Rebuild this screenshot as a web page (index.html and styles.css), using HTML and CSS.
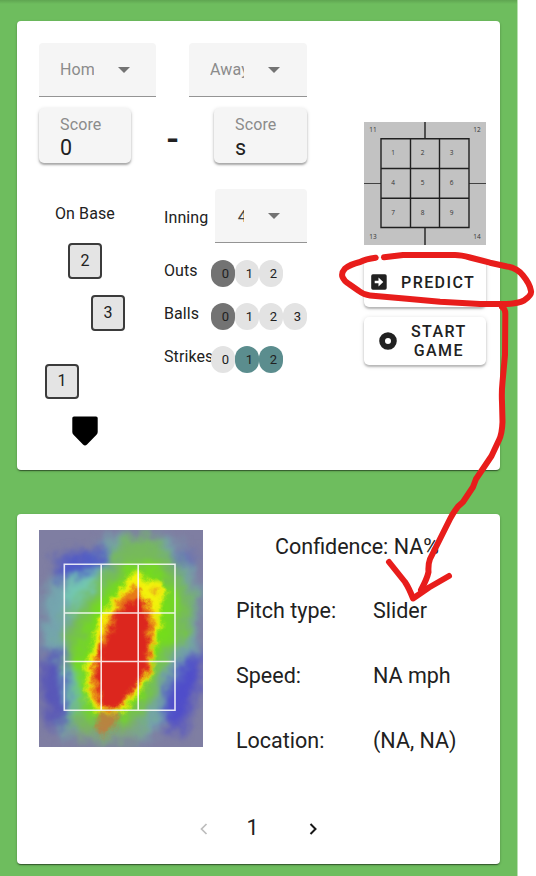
FILE: index.html
```html
<!DOCTYPE html>
<html lang="en">
<head>
<meta charset="utf-8">
<title>Pitch Predictor</title>
<link rel="stylesheet" href="styles.css">
</head>
<body>
<main class="field">
  <section class="card setup">
    <div class="game">
      <div class="row">
        <div class="select"><span class="clip">Home</span><i class="caret"></i></div>
        <div class="select away"><span class="clip">Away</span><i class="caret"></i></div>
      </div>
      <div class="row scores">
        <div class="score"><label>Score</label><b>0</b></div>
        <div class="dash">-</div>
        <div class="score visitor"><label>Score</label><b>s</b></div>
      </div>
      <div class="row state">
        <div class="bases">
          <p>On Base</p>
          <div class="base second">2</div>
          <div class="base third">3</div>
          <div class="base first">1</div>
          <svg class="plate" width="26" height="30" viewBox="0 0 26 30"><path d="M2 0.5H24Q25.7 .5 25.7 2V16Q25.7 17.500 24.500 18.700L15 28.500Q13 30.300 11 28.500L1.500 18.700Q.3 17.500 .3 16V2Q.3 .5 2 .5Z"/></svg>
        </div>
        <div class="counts">
          <div class="inning"><span>Inning</span><div class="select small"><span class="clip">4</span><i class="caret"></i></div></div>
          <div class="count"><span class="name">Outs</span><span class="chip dark">0</span><span class="chip">1</span><span class="chip">2</span></div>
          <div class="count"><span class="name">Balls</span><span class="chip dark">0</span><span class="chip">1</span><span class="chip">2</span><span class="chip">3</span></div>
          <div class="count"><span class="name">Strikes</span><span class="chip">0</span><span class="chip teal">1</span><span class="chip teal">2</span></div>
        </div>
      </div>
    </div>
    <div class="actions">
      <svg class="zones" width="122" height="123" viewBox="0 0 122 123">
        <rect width="122" height="123" fill="#c2c2c2"/>
        <g fill="none" stroke="#202020" stroke-width="1.400">
          <path d="M61 0V16M61 106V123"/>
          <path d="M0 61.500H17M105 61.500H122" stroke-width=".8"/>
          <path d="M17 16.700H105V105.500H17ZM46.500 16.700V105.500M75.500 16.700V105.500M17 46.500H105M17 76.300H105"/>
        </g>
        <g class="zone-text">
          <text x="9" y="9.700">11</text><text x="113" y="9.700">12</text><text x="9" y="116.700">13</text><text x="113" y="116.700">14</text>
          <text x="29" y="33">1</text><text x="58.500" y="33">2</text><text x="87.500" y="33">3</text>
          <text x="29" y="63">4</text><text x="58.500" y="63">5</text><text x="87.500" y="63">6</text>
          <text x="29" y="93">7</text><text x="58.500" y="93">8</text><text x="87.500" y="93">9</text>
        </g>
      </svg>
      <button class="btn predict">
        <svg width="16" height="16" viewBox="0 0 16 16"><rect x=".2" y=".2" width="15.500" height="15.500" rx="1.700" fill="#212121"/><path d="M3.700 6.700H7.500V3.500L12.300 8L7.500 12.500V9.300H3.700Z" fill="#fff"/></svg>
        <span>PREDICT</span>
      </button>
      <button class="btn start">
        <svg width="18" height="18" viewBox="0 0 18 18"><circle cx="9" cy="9" r="5.900" fill="none" stroke="#212121" stroke-width="5.800"/></svg>
        <span>START<br>GAME</span>
      </button>
    </div>
  </section>

  <section class="card result">
    <div class="outcome">
      <svg class="heat" width="164" height="217" viewBox="0 0 164 217">
        <defs>
          <filter id="cloud" filterUnits="userSpaceOnUse" x="-30" y="-30" width="224" height="277" color-interpolation-filters="sRGB">
            <feGaussianBlur stdDeviation="6" result="soft"/>
            <feTurbulence type="fractalNoise" baseFrequency=".07" numOctaves="3" seed="4" result="noise"/>
            <feDisplacementMap in="soft" in2="noise" scale="18" xChannelSelector="R" yChannelSelector="G" result="warp"/>
            <feGaussianBlur in="warp" stdDeviation="1"/>
          </filter>
          <filter id="core" filterUnits="userSpaceOnUse" x="0" y="0" width="164" height="217" color-interpolation-filters="sRGB">
            <feGaussianBlur stdDeviation="2" result="soft"/>
            <feTurbulence type="fractalNoise" baseFrequency=".12" numOctaves="3" seed="8" result="noise"/>
            <feDisplacementMap in="soft" in2="noise" scale="10" xChannelSelector="R" yChannelSelector="G" result="warp"/>
            <feGaussianBlur in="warp" stdDeviation=".6"/>
          </filter>
        </defs>
        <rect width="164" height="217" fill="#7f7ea2"/>
        <g filter="url(#cloud)">
          <path d="M72 4L130 6L152 30L160 60L158 120L143 142L128 185L105 212L50 213L22 204L23 150L4 118L4 60L25 42L52 30Z" fill="#74a5ae"/>
          <path d="M16 26L66 20L66 36L38 48L18 48Z" fill="#4e58c8"/>
          <path d="M3 122L26 128L28 192L12 200L2 165Z" fill="#5856b8"/>
          <path d="M165 118L143 132L127 160L124 195L140 206L152 180L163 140Z" fill="#4f4dca"/>
          <path d="M138 22L158 23L154 36L138 36Z" fill="#6470b8"/>
          <path d="M82 7L116 7L134 28L155 65L150 108L126 134L115 172L94 204L40 206L30 190L35 143L24 116L26 90L60 52Z" fill="#76b95c"/>
          <path d="M92 34L120 37L138 75L136 110L118 136L107 163L86 188L50 188L38 160L36 130L44 94L62 63Z" fill="#74dd1a"/>
          <path d="M26 58L37 46L66 35L60 52L44 70L32 88Z" fill="#73c8b2"/>
          <path d="M26 134L38 140L39 182L28 190Z" fill="#6fc0b8"/>
          <path d="M30 196L110 194L96 214L40 214Z" fill="#85a175" opacity=".6"/>
        </g>
        <g filter="url(#core)">
          <path d="M98 39L107 52L121 50L127 62L120 78L122 96L116 114L114 143L100 162L84 182L57 183L48 162L47 137L55 110L61 86L75 69L86 53Z" fill="#f3f20b"/>
          <path d="M98 54L103 66L111 76L116 92L113 112L112 141L98 156L87 172L74 181L61 180L52 160L53 137L62 109L71 86L80 70L89 61Z" fill="#e77818"/>
          <path d="M78 82L90 72L103 68L109 90L108 112L108 140L94 159L79 178L64 179L59 158L57 139L64 116L72 100Z" fill="#dc261e"/>
          <path d="M59 183L80 183L75 196L66 207L58 202Z" fill="#bf7c40" opacity=".9"/>
          <path d="M115 57L120 61L117 66L113 62Z" fill="#e59b20"/>
        </g>
        <path d="M25.300 34.300H136V180.300H25.300ZM62.200 34.300V180.300M99.200 34.300V180.300M25.300 83H136M25.300 131.500H136" fill="none" stroke="#fff" stroke-opacity=".85" stroke-width="1.600"/>
      </svg>
      <div class="details">
        <p class="confidence">Confidence: NA%</p>
        <dl>
          <dt>Pitch type:</dt><dd>Slider</dd>
          <dt>Speed:</dt><dd>NA mph</dd>
          <dt>Location:</dt><dd>(NA, NA)</dd>
        </dl>
      </div>
    </div>
    <nav class="pager">
      <svg width="8" height="12" viewBox="0 0 8 12"><path d="M6.500 1L1.500 6L6.500 11" fill="none" stroke="#bdbdbd" stroke-width="1.700"/></svg>
      <span>1</span>
      <svg width="8" height="12" viewBox="0 0 8 12"><path d="M1.500 1L6.500 6L1.500 11" fill="none" stroke="#171717" stroke-width="2"/></svg>
    </nav>
  </section>
</main>
<svg class="marker" width="536" height="876" viewBox="0 0 536 876">
  <path d="M375.700 257.700Q366 259 360 262Q350 264.500 345 268.500Q341 273 342.500 277Q344 281 349 284L359 291Q364 295 370 295.500L407 298.700L440 301.700L480 304H507Q518 303.500 524 300.500Q532 295 531 291Q530 284 523 275.500Q517 268 507 266.500L490 262.700L470 257.500Q461 255 455 255H403L384 257.300"/>
  <path d="M502 307Q505.500 309 505.300 314L505 355L502.500 382Q501.500 392 502 402L502.500 422Q502 434 499 440L491.500 456L476 479L473 487L463 502L458 506.500Q453 513 450 519L430 559Q428 564 428.500 572Q427 579 421 590"/>
  <path d="M389 562L405 582Q409 588 413 598.500L429 587.500L449 576"/>
</svg>
</body>
</html>
```
FILE: styles.css
```css
* { box-sizing: border-box; }
body {
  margin: 0;
  height: 876px;
  overflow: hidden;
  position: relative;
  background: #fff;
  font-family: Roboto, sans-serif;
  font-size: 16px;
  color: #212121;
}
p, dl, dd { margin: 0; }
.field {
  width: 518px;
  height: 876px;
  padding: 21px 18px 12px 17px;
  display: flex;
  flex-direction: column;
  gap: 44px;
  background: linear-gradient(#5fa551, #6ebd5e 4px);
  border-right: 1px solid #b9dfb1;
}
.card {
  width: 483px;
  background: #fff;
  border-radius: 4px;
  box-shadow: 0 2px 1px -1px rgba(0, 0, 0, .3), 0 1px 1px rgba(0, 0, 0, .2), 0 1px 3px rgba(0, 0, 0, .2);
}
.setup { height: 449px; padding: 22px 14px 0 22px; display: flex; justify-content: space-between; }
.game { width: 268px; }
.row { display: flex; justify-content: space-between; }
.select {
  width: 117px;
  height: 54px;
  padding: 0 26px 0 21px;
  display: flex;
  align-items: center;
  justify-content: space-between;
  background: #f5f5f5;
  border-bottom: 1px solid #949494;
  border-radius: 4px 4px 0 0;
  color: #8b8b8b;
}
.select.away { width: 118px; padding-right: 27px; }
.select.small { width: 92px; padding: 0 27px 0 22px; color: #444; }
.clip { width: 34px; overflow: hidden; white-space: nowrap; letter-spacing: .15px; }
.small .clip { width: 7px; text-indent: .7px; font-size: 17px; }
.caret { border: 6.500px solid transparent; border-top: 6.500px solid #737373; border-bottom: 0; margin-top: 1px; }
.scores { margin-top: 11px; }
.score {
  width: 92px;
  height: 55px;
  padding: 7px 0 0 21px;
  background: #f5f5f5;
  border-radius: 5px;
  box-shadow: 0 2px 2px rgba(0, 0, 0, .28), 0 1px 4px rgba(0, 0, 0, .14);
}
.score.visitor { width: 93px; }
.score label { display: block; font-size: 16px; line-height: 19px; letter-spacing: .15px; color: #8b8b8b; }
.score b { display: block; font-size: 21.500px; line-height: 28px; font-weight: 400; }
.dash { width: 14px; padding-top: 12px; font-size: 36px; line-height: 40px; text-align: center; font-weight: 500; }
.state { margin-top: 26px; }
.bases { width: 110px; }
.bases p { padding-left: 16px; line-height: 20px; margin-top: 15px; letter-spacing: .1px; }
.base {
  width: 34px;
  height: 36px;
  background: #e4e4e4;
  border: 2px solid #3b3b3b;
  border-radius: 4px;
  text-align: center;
  line-height: 31px;
}
.second { margin: 19px 0 0 29px; }
.third { margin: 16px 0 0 52px; }
.first { margin: 33px 0 0 6px; height: 35px; line-height: 30px; }
.plate { display: block; margin: 17px 0 0 33px; }
.counts { width: 143px; }
.inning { display: flex; justify-content: space-between; align-items: center; height: 54px; margin-bottom: 17px; }
.inning > span { letter-spacing: .1px; padding-top: 3px; }
.count { display: flex; height: 27px; margin-bottom: 16px; }
.name { width: 47px; line-height: 21px; white-space: nowrap; letter-spacing: .1px; }
.chip {
  width: 24px;
  height: 27px;
  padding-left: 5px;
  border-radius: 12px;
  background: #e3e3e3;
  font-size: 13px;
  line-height: 27px;
  text-align: center;
}
.dark { background: #737373; }
.teal { background: #5b8d8e; }
.actions { width: 122px; padding-top: 79px; }
.zones { display: block; }
.zone-text { font: 6.500px "Open Sans", sans-serif; fill: #333; text-anchor: middle; }
.btn {
  display: flex;
  align-items: center;
  width: 122px;
  border: 0;
  background: #fff;
  border-radius: 5px;
  box-shadow: 0 2px 2px rgba(0, 0, 0, .22), 0 1px 5px rgba(0, 0, 0, .14);
  color: #212121;
  font: 500 16px/19px Roboto, sans-serif;
  letter-spacing: 1.430px;
}
.predict { height: 49px; margin-top: 13px; padding: 0 0 0 7px; gap: 14px; }
.predict svg { position: relative; top: -1px; }
.start { height: 48px; margin-top: 10px; padding: 0 0 0 15px; gap: 14px; }
.btn svg { flex: none; }
.result { height: 350px; padding: 16px 22px 0; }
.outcome { display: flex; height: 217px; }
.heat { display: block; }
.details { flex: 1; padding: 1px 0 0 33px; font-size: 21.500px; line-height: 32px; }
.confidence { padding-left: 39px; }
dl { display: grid; grid-template-columns: 137px 1fr; row-gap: 33px; margin-top: 32px; }
.pager {
  display: flex;
  align-items: center;
  justify-content: space-between;
  width: 117px;
  margin: 67px 0 0 161px;
  font-size: 21.500px;
  line-height: 28px;
}
.pager span { margin-right: 12px; }
.pager svg { margin-top: 2px; }
.marker { position: absolute; inset: 0; fill: none; stroke: #e81d1b; stroke-width: 6; stroke-linecap: round; stroke-linejoin: round; }
```
